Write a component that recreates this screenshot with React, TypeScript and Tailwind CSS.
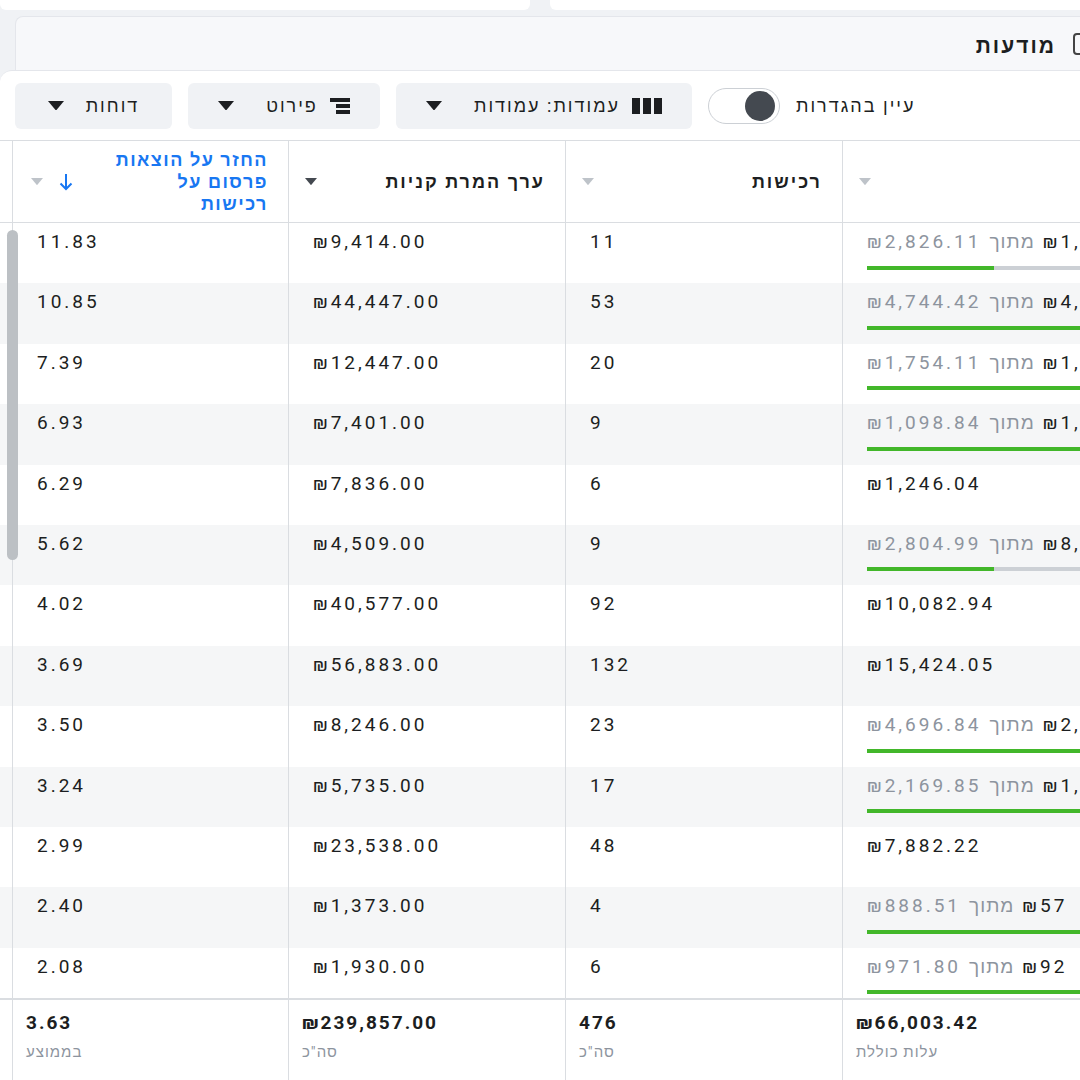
import React from "react";

type Row = { roas: string; val: string; buys: string; spent: string; budget?: string; bar?: number };
const rows: Row[] = [
  { roas: "11.83", val: "₪9,414.00", buys: "11", spent: "₪2,826.11", budget: "₪1,000", bar: 0.5 },
  { roas: "10.85", val: "₪44,447.00", buys: "53", spent: "₪4,744.42", budget: "₪4,000", bar: 1 },
  { roas: "7.39", val: "₪12,447.00", buys: "20", spent: "₪1,754.11", budget: "₪1,000", bar: 1 },
  { roas: "6.93", val: "₪7,401.00", buys: "9", spent: "₪1,098.84", budget: "₪1,000", bar: 1 },
  { roas: "6.29", val: "₪7,836.00", buys: "6", spent: "₪1,246.04" },
  { roas: "5.62", val: "₪4,509.00", buys: "9", spent: "₪2,804.99", budget: "₪8,000", bar: 0.5 },
  { roas: "4.02", val: "₪40,577.00", buys: "92", spent: "₪10,082.94" },
  { roas: "3.69", val: "₪56,883.00", buys: "132", spent: "₪15,424.05" },
  { roas: "3.50", val: "₪8,246.00", buys: "23", spent: "₪4,696.84", budget: "₪2,000", bar: 1 },
  { roas: "3.24", val: "₪5,735.00", buys: "17", spent: "₪2,169.85", budget: "₪1,000", bar: 1 },
  { roas: "2.99", val: "₪23,538.00", buys: "48", spent: "₪7,882.22" },
  { roas: "2.40", val: "₪1,373.00", buys: "4", spent: "₪888.51", budget: "₪57", bar: 1 },
  { roas: "2.08", val: "₪1,930.00", buys: "6", spent: "₪971.80", budget: "₪92", bar: 1 },
];

const Caret = ({ c = "#1c1e21", s = 12 }: { c?: string; s?: number }) => (
  <svg width={s} height={s * 0.6} viewBox="0 0 10 6"><path d="M0 0h10L5 6z" fill={c} /></svg>
);

const num = "text-[19px] tracking-[3px] text-[#1c1e21]";

export default function App() {
  const font = { fontFamily: "Roboto, 'Noto Sans', 'Liberation Sans', sans-serif" };
  return (
    <div className="w-[1080px] h-[1080px] overflow-hidden bg-[#f0f2f5] relative" style={font}>
      <div className="h-[10px] flex gap-[20px]">
        <div className="w-[530px] bg-white rounded-b-md" />
        <div className="flex-1 bg-white rounded-bl-md" />
      </div>
      <div className="ml-[15px] mt-[6px] h-[60px] bg-[#f7f8fa] rounded-tl-lg flex items-center justify-end pr-[24px] gap-[12px] border-t border-l border-[#e4e6eb]">
        <span className="text-[21px] tracking-[2px] font-bold text-[#1c1e21]" dir="rtl">מודעות</span>
      </div>
      <div className="absolute top-[33px] left-[1073px] w-[14px] h-[22px] border-2 border-[#444] rounded-sm" />
      <div className="absolute top-[70px] left-0 w-[1080px] h-[70px] bg-white rounded-tl-xl border-t border-[#e4e6eb] flex items-center px-[15px] gap-[16px]">
        <div className="w-[157px] h-[46px] bg-[#f0f2f5] rounded-md flex items-center justify-center gap-[22px]">
          <Caret s={16} />
          <span className="text-[18px] tracking-[2px] text-[#1c1e21]">דוחות</span>
        </div>
        <div className="w-[192px] h-[46px] bg-[#f0f2f5] rounded-md flex items-center justify-center gap-[12px]">
          <Caret s={16} />
          <span className="text-[18px] tracking-[2px] text-[#1c1e21] ml-[20px]">פירוט</span>
          <svg width="20" height="18" viewBox="0 0 20 18"><rect x="0" y="1" width="20" height="4" fill="#1c1e21" /><rect x="6" y="7" width="14" height="4" fill="#1c1e21" /><rect x="6" y="13" width="14" height="4" fill="#1c1e21" /></svg>
        </div>
        <div className="w-[296px] h-[46px] bg-[#f0f2f5] rounded-md flex items-center justify-center gap-[12px]">
          <Caret s={16} />
          <span className="text-[18px] tracking-[2px] text-[#1c1e21] ml-[20px]" dir="rtl">עמודות: עמודות</span>
          <svg width="30" height="18" viewBox="0 0 30 18"><rect x="0" y="1" width="8" height="16" fill="#1c1e21" /><rect x="11" y="1" width="8" height="16" fill="#1c1e21" /><rect x="22" y="1" width="8" height="16" fill="#1c1e21" /></svg>
        </div>
        <div className="w-[72px] h-[36px] rounded-full border border-[#ccd0d5] flex items-center justify-end pr-[4px]">
          <div className="w-[30px] h-[30px] rounded-full bg-[#444950]" />
        </div>
        <span className="text-[18px] tracking-[2px] text-[#1c1e21] ml-[0px]">עיין בהגדרות</span>
      </div>
      <div className="absolute top-[140px] left-0 w-[1120px] bg-white">
        <div className="flex h-[83px] border-y border-[#dadde1] pl-[12px]">
          <div className="w-[276px] border-l border-[#dadde1] flex items-center pl-[18px] pr-[20px]">
            <Caret c="#bec3c9" />
            <svg className="ml-[16px]" width="14" height="18" viewBox="0 0 14 18"><path d="M7 1v15M1.5 10.5L7 16l5.5-5.5" stroke="#1877f2" strokeWidth="2" fill="none" /></svg>
            <div className="flex-1 text-right text-[18px] tracking-[1.5px] font-bold text-[#1877f2] leading-[22px]" dir="rtl">החזר על הוצאות<br />פרסום על<br />רכישות</div>
          </div>
          <div className="w-[277px] border-l border-[#dadde1] flex items-center pl-[16px] pr-[20px]">
            <Caret c="#444950" />
            <div className="flex-1 text-right text-[18px] tracking-[2px] font-bold text-[#1c1e21]">ערך המרת קניות</div>
          </div>
          <div className="w-[277px] border-l border-[#dadde1] flex items-center pl-[16px] pr-[20px]">
            <Caret c="#bec3c9" />
            <div className="flex-1 text-right text-[18px] tracking-[2px] font-bold text-[#1c1e21]">רכישות</div>
          </div>
          <div className="flex-1 border-l border-[#dadde1] flex items-center pl-[16px]">
            <Caret c="#bec3c9" />
          </div>
        </div>
        {rows.map((r, i) => (
          <div key={i} className={`flex ${i === rows.length - 1 ? "h-[50px]" : "h-[60.4px]"} pl-[12px] ${i % 2 ? "bg-[#f5f6f7]" : "bg-white"}`}>
            <div className={`w-[276px] border-l border-[#dadde1] pl-[24px] pt-[5px] ${num}`}>{r.roas}</div>
            <div className={`w-[277px] border-l border-[#dadde1] pl-[24px] pt-[5px] ${num}`}>{r.val}</div>
            <div className={`w-[277px] border-l border-[#dadde1] pl-[24px] pt-[5px] ${num}`}>{r.buys}</div>
            <div className="flex-1 border-l border-[#dadde1] pl-[24px] pt-[5px] overflow-hidden">
              {r.budget ? (
                <>
                  <div className="flex gap-[8px] whitespace-nowrap text-[19px] tracking-[3px]" dir="ltr">
                    <span className="text-[#8d949e]">{r.spent}</span>
                    <span className="text-[#8d949e] tracking-[1px]">מתוך</span>
                    <span className="text-[#1c1e21]">{r.budget}</span>
                  </div>
                  <div className="mt-[9px] h-[4px] bg-[#ccd0d5] flex">
                    <div className="h-full bg-[#42b72a]" style={{ width: `${(r.bar ?? 0) * 100}%` }} />
                  </div>
                </>
              ) : (
                <div className={num}>{r.spent}</div>
              )}
            </div>
          </div>
        ))}
        <div className="flex h-[90px] pl-[12px] border-t-2 border-[#dadde1]">
          {[["3.63", "בממוצע"], ["₪239,857.00", "סה\"כ"], ["476", "סה\"כ"], ["₪66,003.42", "עלות כוללת"]].map(([a, b], i) => (
            <div key={i} className={`${i === 3 ? "flex-1" : i === 0 ? "w-[276px]" : "w-[277px]"} border-l border-[#dadde1] pl-[13px] pt-[9px]`}>
              <div className="text-[19px] font-bold text-[#1c1e21] tracking-[2px]">{a}</div>
              <div className="text-[15px] tracking-[1px] text-[#8d949e] mt-[4px]" dir="rtl" style={{ textAlign: "left" }}>{b}</div>
            </div>
          ))}
        </div>
      </div>
      <div className="absolute left-[7px] top-[230px] w-[11px] h-[330px] rounded-full bg-[#bcc0c4]" />
    </div>
  );
}
